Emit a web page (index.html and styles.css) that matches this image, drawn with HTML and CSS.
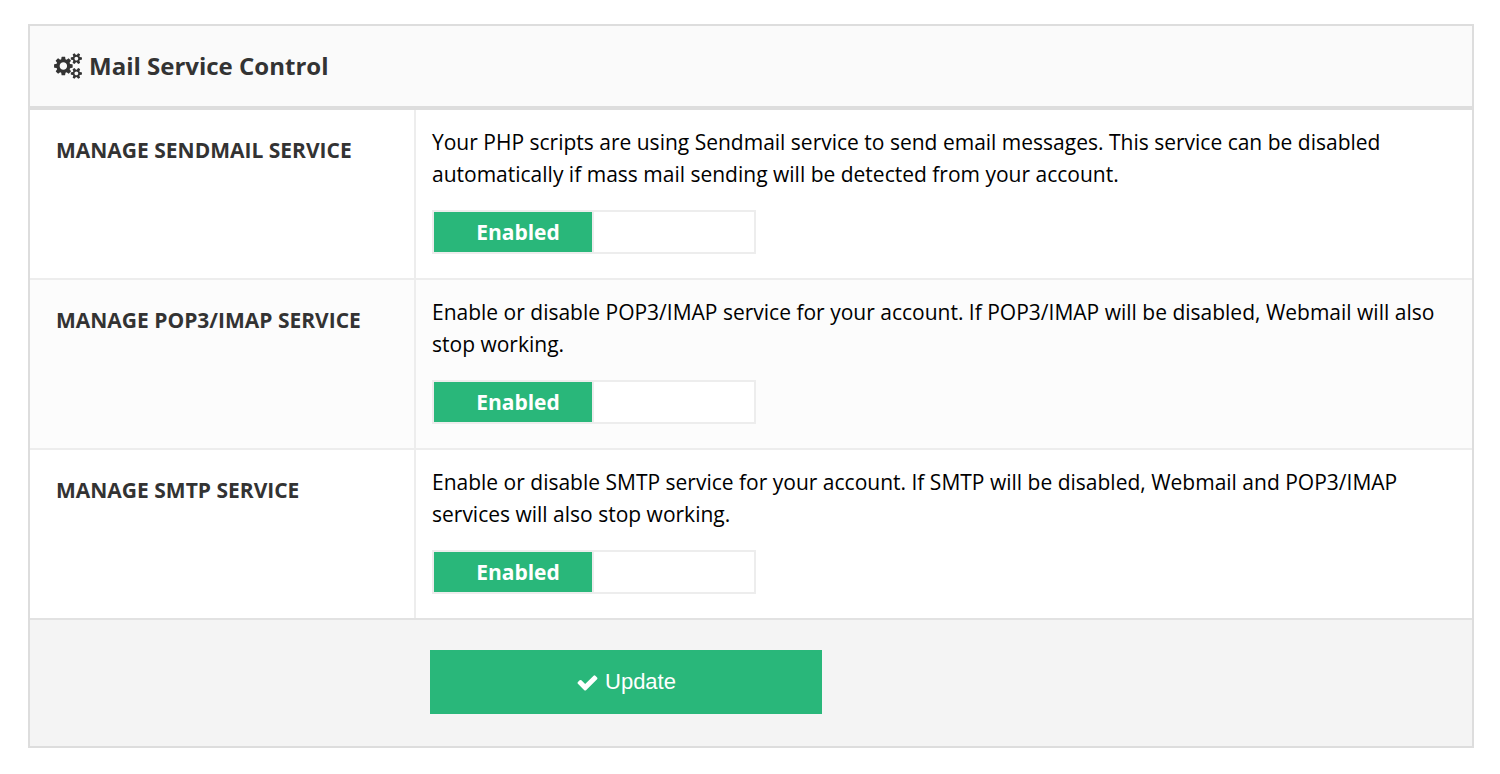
FILE: index.html
```html
<!DOCTYPE html>
<html lang="en">

<head>
    <meta charset="UTF-8" />
    <meta name="viewport" content="width=device-width, initial-scale=1.0" />
    <title>Mail Service Control</title>
    <link rel="stylesheet" href="styles.css">
</head>

<body>
    <form class="panel">
        <h2 class="panel-title">
            <svg class="icon-cogs" viewBox="0 0 1920 1792" aria-hidden="true">
                <path d="M896 896q0-106-75-181t-181-75-181 75-75 181 75 181 181 75 181-75 75-181zm768 512q0-52-38-90t-90-38-90 38-38 90q0 53 37.5 90.5t90.5 37.5 90.5-37.5 37.5-90.5zm0-1024q0-52-38-90t-90-38-90 38-38 90q0 53 37.5 90.5t90.5 37.5 90.5-37.5 37.5-90.5zm-384 421v185q0 10-7 19.5t-16 10.5l-155 24q-11 35-32 76 34 48 90 115 7 11 7 20 0 12-7 19-23 30-82.5 89.5t-78.5 59.5q-11 0-21-7l-115-90q-37 19-77 31-11 108-23 155-7 24-30 24h-186q-11 0-20-7.5t-10-17.5l-23-153q-34-10-75-31l-118 89q-7 7-20 7-11 0-21-8-144-133-144-160 0-9 7-19 10-14 41-53t47-61q-23-44-35-82l-152-24q-10-1-17-9.5t-7-19.5v-185q0-10 7-19.5t16-10.5l155-24q11-35 32-76-34-48-90-115-7-11-7-20 0-12 7-20 22-30 82-89t79-59q11 0 21 7l115 90q34-18 77-32 11-108 23-154 7-24 30-24h186q11 0 20 7.5t10 17.5l23 153q34 10 75 31l118-89q8-7 20-7 11 0 21 8 144 133 144 160 0 8-7 19-12 16-42 54t-45 60q23 48 34 82l152 23q10 2 17 10.5t7 19.5zm640 533v140q0 16-149 31-12 27-30 52 51 113 51 138 0 4-4 7-122 71-124 71-8 0-46-47t-52-68q-20 2-30 2t-30-2q-14 21-52 68t-46 47q-2 0-124-71-4-3-4-7 0-25 51-138-18-25-30-52-149-15-149-31v-140q0-16 149-31 13-29 30-52-51-113-51-138 0-4 4-7 4-2 35-20t59-34 30-16q8 0 46 46.5t52 67.5q20-2 30-2t30 2q51-71 92-112l6-2q4 0 124 70 4 3 4 7 0 25-51 138 17 23 30 52 149 15 149 31zm0-1024v140q0 16-149 31-12 27-30 52 51 113 51 138 0 4-4 7-122 71-124 71-8 0-46-47t-52-68q-20 2-30 2t-30-2q-14 21-52 68t-46 47q-2 0-124-71-4-3-4-7 0-25 51-138-18-25-30-52-149-15-149-31v-140q0-16 149-31 13-29 30-52-51-113-51-138 0-4 4-7 4-2 35-20t59-34 30-16q8 0 46 46.5t52 67.5q20-2 30-2t30 2q51-71 92-112l6-2q4 0 124 70 4 3 4 7 0 25-51 138 17 23 30 52 149 15 149 31z" />
            </svg>
            Mail Service Control
        </h2>

        <div class="row">
            <div class="row-label" id="sendmailLabel">MANAGE SENDMAIL SERVICE</div>
            <div class="row-content">
                <p>Your PHP scripts are using Sendmail service to send email messages. This service can be disabled automatically if mass mail sending will be detected from your account.</p>
                <label class="switch">
                    <input type="checkbox" name="sendmail" aria-describedby="sendmailLabel" checked>
                    <span class="switch-on">Enabled</span>
                    <span class="switch-off"></span>
                </label>
            </div>
        </div>

        <div class="row row-alt">
            <div class="row-label" id="popLabel">MANAGE POP3/IMAP SERVICE</div>
            <div class="row-content">
                <p>Enable or disable POP3/IMAP service for your account. If POP3/IMAP will be disabled, Webmail will also stop working.</p>
                <label class="switch">
                    <input type="checkbox" name="pop" aria-describedby="popLabel" checked>
                    <span class="switch-on">Enabled</span>
                    <span class="switch-off"></span>
                </label>
            </div>
        </div>

        <div class="row">
            <div class="row-label" id="smtpLabel">MANAGE SMTP SERVICE</div>
            <div class="row-content">
                <p>Enable or disable SMTP service for your account. If SMTP will be disabled, Webmail and POP3/IMAP services will also stop working.</p>
                <label class="switch">
                    <input type="checkbox" name="smtp" aria-describedby="smtpLabel" checked>
                    <span class="switch-on">Enabled</span>
                    <span class="switch-off"></span>
                </label>
            </div>
        </div>

        <div class="panel-footer">
            <button type="button" class="btn-update">
                <svg class="icon-check" viewBox="0 0 1792 1792" aria-hidden="true">
                    <path d="M1671 566q0 40-28 68l-724 724-136 136q-28 28-68 28t-68-28l-136-136-362-362q-28-28-28-68t28-68l136-136q28-28 68-28t68 28l294 295 656-657q28-28 68-28t68 28l136 136q28 28 28 68z" />
                </svg>
                Update
            </button>
        </div>
    </form>
</body>

</html>
```

FILE: styles.css
```css
* {
    box-sizing: border-box;
}

body {
    margin: 0;
    padding: 24px 26px 26px 28px;
    background: #fff;
    color: #000;
    font-family: "Open Sans", sans-serif;
    font-size: 21px;
    line-height: 32px;
}

.panel {
    border: 2px solid #ddd;
}

.panel-title {
    display: flex;
    align-items: center;
    gap: 7px;
    margin: 0;
    padding: 22px 24px;
    border-bottom: 4px solid #ddd;
    background-color: #fafafa;
    color: #333;
    font-size: 24px;
    font-weight: 700;
    line-height: 36px;
}

.icon-cogs {
    width: 28px;
    height: 26px;
    fill: #333;
}

/* Service rows */
.row {
    display: grid;
    grid-template-columns: 386px 1fr;
    border-bottom: 2px solid #ededed;
    background-color: #fff;
}

.row-alt {
    background-color: #fcfcfc;
}

.row-label {
    padding: 24px 26px;
    border-right: 2px solid #ededed;
    color: #333;
    font-weight: 700;
}

.row-content {
    padding: 16px 16px 24px;
}

.row-content p {
    margin: 0 0 20px;
}

/* Enabled / disabled switch */
.switch {
    display: flex;
    position: relative;
    width: 324px;
    height: 44px;
    border: 2px solid #ededed;
    background-color: #fff;
    cursor: pointer;
}

.switch input {
    position: absolute;
    inset: 0;
    width: 100%;
    height: 100%;
    margin: 0;
    opacity: 0;
    cursor: pointer;
}

.switch-on {
    width: 160px;
    padding-left: 10px;
    border-right: 2px solid #ededed;
    background-color: #29b77a;
    color: #fff;
    font-weight: 700;
    line-height: 40px;
    text-align: center;
}

.switch-off {
    flex: 1;
}

.switch input:not(:checked) + .switch-on {
    background-color: #fff;
}

/* Footer */
.panel-footer {
    padding: 30px 16px 32px 400px;
    background-color: #f4f4f4;
}

.row:nth-last-child(2) {
    border-bottom-color: #e2e2e2;
}

.btn-update {
    display: flex;
    align-items: center;
    justify-content: center;
    gap: 6px;
    width: 392px;
    height: 64px;
    border: none;
    background-color: #29b77a;
    color: #fff;
    font-family: "Liberation Sans", sans-serif;
    font-size: 22px;
    cursor: pointer;
}

.icon-check {
    width: 23px;
    height: 23px;
    fill: #fff;
}
```
